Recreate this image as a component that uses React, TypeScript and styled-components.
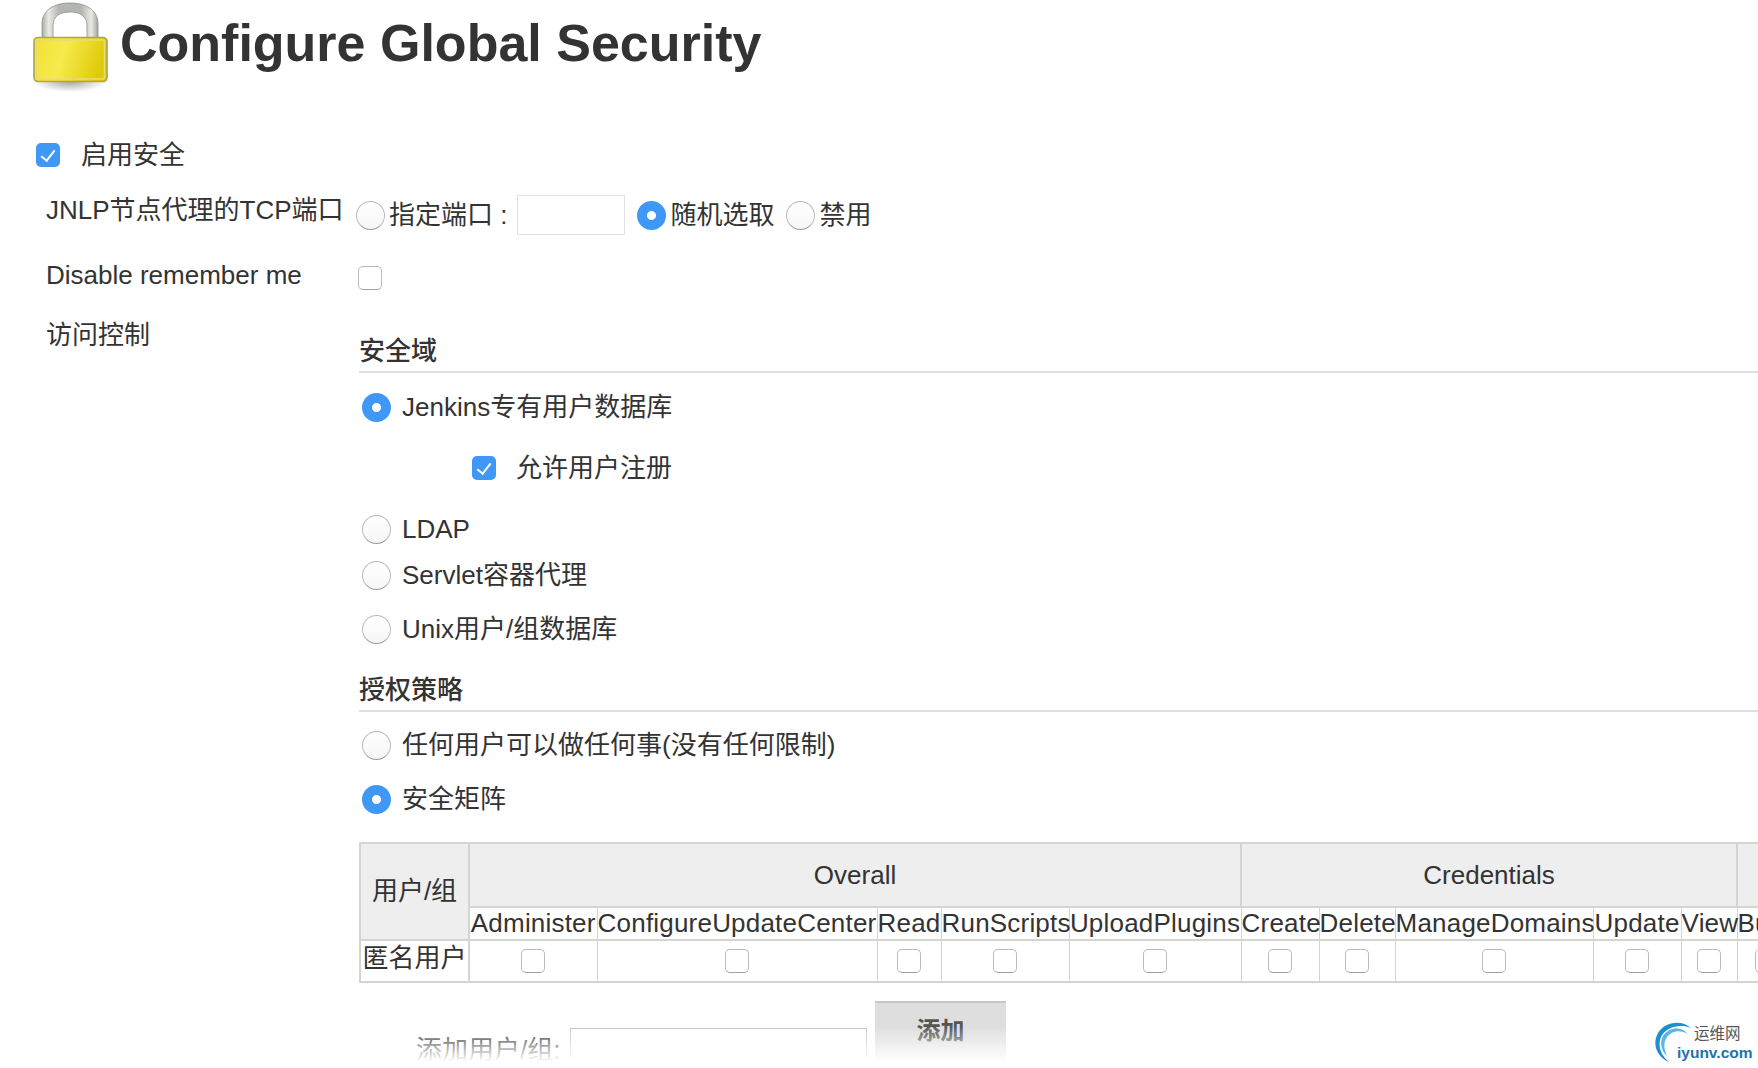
import React from "react";
import styled, { createGlobalStyle } from "styled-components";

const GlobalStyle = createGlobalStyle`
  html, body {
    margin: 0;
    padding: 0;
    background: #fff;
  }
  body {
    font-family: "Liberation Sans", "Noto Sans CJK SC", sans-serif;
    font-size: 26px;
    color: #333;
  }
`;

const columns = [
  { name: "Administer", width: 128 },
  { name: "ConfigureUpdateCenter", width: 280 },
  { name: "Read", width: 64 },
  { name: "RunScripts", width: 128 },
  { name: "UploadPlugins", width: 172 },
  { name: "Create", width: 78 },
  { name: "Delete", width: 76 },
  { name: "ManageDomains", width: 198 },
  { name: "Update", width: 88 },
  { name: "View", width: 56 },
  { name: "Build", width: 60 },
];

const LockIcon = () => (
  <LockSvg viewBox="33 0 75 92">
    <defs>
      <linearGradient id="shackle" x1="0" y1="0" x2="1" y2="0">
        <stop offset="0" stopColor="#a9aca6" />
        <stop offset="0.12" stopColor="#e9eae7" />
        <stop offset="0.3" stopColor="#b4b6b1" />
        <stop offset="0.7" stopColor="#b4b6b1" />
        <stop offset="0.88" stopColor="#e9eae7" />
        <stop offset="1" stopColor="#a2a59f" />
      </linearGradient>
      <linearGradient id="lockBody" x1="0" y1="0" x2="1" y2="0.2">
        <stop offset="0" stopColor="#f2e032" />
        <stop offset="0.45" stopColor="#f6ea4e" />
        <stop offset="1" stopColor="#e0cb08" />
      </linearGradient>
      <radialGradient id="lockShadow" cx="0.5" cy="0.5" r="0.5">
        <stop offset="0" stopColor="#a8a8a8" />
        <stop offset="1" stopColor="#ffffff" />
      </radialGradient>
    </defs>
    <ellipse cx="70" cy="82" rx="36" ry="10" fill="url(#lockShadow)" />
    <path
      d="M42 40 V24 C42 10 54 3 70 3 C86 3 98 10 98 24 V40 H87 V26 C87 16 80 12 70 12 C60 12 53 16 53 26 V40 Z"
      fill="url(#shackle)"
      stroke="#8f928c"
      strokeWidth="0.8"
    />
    <rect x="34" y="37.5" width="73" height="44" rx="4" fill="url(#lockBody)" stroke="#b3a23e" strokeWidth="1.6" />
    <rect x="36.5" y="40" width="68" height="39" rx="2" fill="none" stroke="#e6db7c" strokeWidth="1.4" />
  </LockSvg>
);

const WatermarkIcon = () => (
  <WatermarkSvg viewBox="0 0 38 41">
    <path d="M37 6 C27 -3 9 0 3 13 C-2 25 5 36 15 40 C8 34 3 25 7 15 C11 6 25 1 37 6 Z" fill="#1f8fd0" />
    <path d="M34 12 C27 4 15 5 9 14 C5 21 8 30 13 34 C10 27 9 21 13 15 C17 9 26 7 34 12 Z" fill="#58b6e4" />
  </WatermarkSvg>
);

export default function App() {
  return (
    <Page>
      <GlobalStyle />
      <Header>
        <LockIcon />
        <Title>Configure Global Security</Title>
      </Header>

      <EnableRow>
        <CheckBox type="checkbox" checked readOnly />
        <LiftedText>启用安全</LiftedText>
      </EnableRow>

      <FieldRow $height={70}>
        <FieldLabel $shift={-8}>JNLP节点代理的TCP端口</FieldLabel>
        <PortOptions>
          <Radio type="radio" readOnly checked={false} />
          <PortText>指定端口 :</PortText>
          <PortInput />
          <Radio type="radio" readOnly checked />
          <PortText>随机选取</PortText>
          <Radio type="radio" readOnly checked={false} $left={12} />
          <PortText>禁用</PortText>
        </PortOptions>
      </FieldRow>

      <FieldRow $height={55}>
        <FieldLabel $shift={-2}>Disable remember me</FieldLabel>
        <RememberBox type="checkbox" readOnly checked={false} />
      </FieldRow>

      <AccessRow>
        <AccessLabel>访问控制</AccessLabel>
        <AccessBody>
          <SectionTitle>安全域</SectionTitle>
          <Option $top={14}>
            <Radio type="radio" readOnly checked />
            <LiftedText>Jenkins专有用户数据库</LiftedText>
          </Option>
          <SubOption>
            <CheckBox type="checkbox" checked readOnly />
            <LiftedText>允许用户注册</LiftedText>
          </SubOption>
          <Option $top={21}>
            <Radio type="radio" readOnly checked={false} />
            <span>LDAP</span>
          </Option>
          <Option $top={6}>
            <Radio type="radio" readOnly checked={false} />
            <LiftedText>Servlet容器代理</LiftedText>
          </Option>
          <Option $top={14}>
            <Radio type="radio" readOnly checked={false} />
            <LiftedText>Unix用户/组数据库</LiftedText>
          </Option>

          <SectionTitle $top={16}>授权策略</SectionTitle>
          <Option $top={13}>
            <Radio type="radio" readOnly checked={false} />
            <LiftedText>任何用户可以做任何事(没有任何限制)</LiftedText>
          </Option>
          <Option $top={14}>
            <Radio type="radio" readOnly checked />
            <LiftedText>安全矩阵</LiftedText>
          </Option>

          <Matrix>
            <colgroup>
              <col style={{ width: 109 }} />
              {columns.map((c) => (
                <col key={c.name} style={{ width: c.width }} />
              ))}
            </colgroup>
            <thead>
              <tr>
                <UserHead rowSpan={2}>用户/组</UserHead>
                <GroupHead colSpan={5}>Overall</GroupHead>
                <GroupHead colSpan={5}>Credentials</GroupHead>
                <GroupHead />
              </tr>
              <tr>
                {columns.map((c) => (
                  <PermHead key={c.name}>{c.name}</PermHead>
                ))}
              </tr>
            </thead>
            <tbody>
              <tr>
                <UserCell>匿名用户</UserCell>
                {columns.map((c) => (
                  <BoxCell key={c.name}>
                    <CellBox type="checkbox" readOnly checked={false} />
                  </BoxCell>
                ))}
              </tr>
            </tbody>
          </Matrix>

          <AddRow>
            <AddLabel>添加用户/组:</AddLabel>
            <AddInput />
            <AddButton>添加</AddButton>
          </AddRow>
        </AccessBody>
      </AccessRow>

      <BottomFade />
      <Watermark>
        <WatermarkIcon />
        <WatermarkCn>运维网</WatermarkCn>
        <WatermarkEn>iyunv.com</WatermarkEn>
      </Watermark>
    </Page>
  );
}

const Page = styled.div`
  position: relative;
  width: 1758px;
  height: 1068px;
  overflow: hidden;
  background: #fff;
`;

const Header = styled.div`
  display: flex;
  align-items: flex-start;
  column-gap: 12px;
  height: 130px;
  padding-left: 33px;
  box-sizing: border-box;
`;

const LockSvg = styled.svg`
  width: 75px;
  height: 92px;
  flex: none;
`;

const Title = styled.h1`
  margin: 17px 0 0;
  font-size: 52px;
  line-height: 52px;
  font-weight: 700;
  color: #333;
`;

const EnableRow = styled.div`
  display: flex;
  align-items: center;
  column-gap: 21px;
  height: 50px;
  padding-left: 36px;
`;

const LiftedText = styled.span`
  margin-bottom: 5px;
  white-space: nowrap;
`;

const FieldRow = styled.div<{ $height: number }>`
  display: flex;
  align-items: center;
  height: ${(p) => p.$height}px;
`;

const FieldLabel = styled.div<{ $shift: number }>`
  width: 310px;
  padding-left: 46px;
  flex: none;
  margin-top: ${(p) => p.$shift * 2}px;
  white-space: nowrap;
`;

const PortOptions = styled.div`
  display: flex;
  align-items: center;
`;

const PortText = styled.span`
  margin: 0 0 5px 4px;
  white-space: nowrap;
`;

const PortInput = styled.input`
  width: 108px;
  height: 40px;
  box-sizing: border-box;
  margin: 0 12px 0 10px;
  border: 1px solid #e2e2e2;
  background: #fff;
`;

const Radio = styled.input<{ $left?: number }>`
  appearance: none;
  flex: none;
  width: 29px;
  height: 29px;
  margin: 0 0 0 ${(p) => p.$left ?? 0}px;
  border-radius: 50%;
  box-sizing: border-box;
  border: 1px solid #bbb;
  border-bottom-color: #999;
  background: linear-gradient(#fff, #f6f6f6);
  &:checked {
    border: none;
    background: radial-gradient(circle, #fff 0, #fff 4px, #3f97f6 5px);
  }
`;

const CheckBox = styled.input`
  appearance: none;
  position: relative;
  flex: none;
  width: 24px;
  height: 24px;
  margin: 0;
  border-radius: 5px;
  background: #3f97f6;
  &::after {
    content: "";
    position: absolute;
    left: 8px;
    top: 4px;
    width: 6px;
    height: 12px;
    border: solid #fff;
    border-width: 0 2.5px 2.5px 0;
    transform: rotate(38deg);
  }
`;

const EmptyBox = styled.input`
  appearance: none;
  flex: none;
  width: 24px;
  height: 24px;
  margin: 0;
  box-sizing: border-box;
  border-radius: 5px;
  border: 1px solid #bbb;
  border-bottom-color: #a0a0a0;
  background: #fff;
`;

const RememberBox = styled(EmptyBox)`
  margin-left: 2px;
`;

const AccessRow = styled.div`
  display: flex;
  align-items: flex-start;
`;

const AccessLabel = styled.div`
  width: 313px;
  padding-left: 46px;
  margin-top: 9px;
  flex: none;
`;

const AccessBody = styled.div`
  flex: none;
  width: 1399px;
  padding-top: 21px;
`;

const SectionTitle = styled.div<{ $top?: number }>`
  height: 47px;
  box-sizing: border-box;
  margin-top: ${(p) => p.$top ?? 0}px;
  padding-top: 8px;
  line-height: 34px;
  font-weight: 500;
  border-bottom: 2px solid #dedede;
`;

const Option = styled.div<{ $top: number }>`
  display: flex;
  align-items: center;
  column-gap: 11px;
  height: 40px;
  margin-top: ${(p) => p.$top}px;
  padding-left: 3px;
`;

const SubOption = styled.div`
  display: flex;
  align-items: center;
  column-gap: 20px;
  height: 40px;
  margin-top: 21px;
  padding-left: 113px;
`;

const Matrix = styled.table`
  margin-top: 23px;
  width: 1437px;
  table-layout: fixed;
  border-collapse: collapse;
  border: 2px solid #d4d4d0;
`;

const GroupHead = styled.th`
  height: 62px;
  padding: 0;
  background: #eee;
  border: 2px solid #d4d4d0;
  font-weight: 400;
`;

const UserHead = styled(GroupHead)`
  padding-bottom: 6px;
`;

const PermHead = styled.th`
  height: 29px;
  padding: 0 0 2px;
  border: 1px solid #d4d4d0;
  border-bottom-width: 2px;
  border-top-width: 2px;
  font-weight: 400;
  line-height: 28px;
  letter-spacing: 0.2px;
  text-align: center;
  white-space: nowrap;
  overflow: visible;
`;

const UserCell = styled.td`
  height: 34px;
  padding: 0 0 6px;
  line-height: 30px;
  background: #fff;
  border: 2px solid #d4d4d0;
  text-align: center;
  white-space: nowrap;
`;

const BoxCell = styled.td`
  height: 40px;
  padding: 0;
  border: 1px solid #d4d4d0;
  border-bottom-width: 2px;
  text-align: center;
  vertical-align: middle;
`;

const CellBox = styled(EmptyBox)`
  display: block;
  margin: 0 auto;
`;

const AddRow = styled.div`
  display: flex;
  align-items: flex-start;
  margin-top: 18px;
  padding-left: 57px;
`;

const AddLabel = styled.span`
  margin-top: 32px;
  width: 154px;
  white-space: nowrap;
  line-height: 34px;
`;

const AddInput = styled.input`
  width: 297px;
  height: 50px;
  margin-top: 27px;
  box-sizing: border-box;
  border: 1px solid #c4c4c4;
  background: #fff;
`;

const AddButton = styled.button`
  width: 131px;
  height: 80px;
  margin-left: 8px;
  padding: 0 0 28px;
  border: none;
  border-top: 2px solid #c8c8c8;
  background: #dedede;
  color: #555;
  font-family: inherit;
  font-size: 24px;
  font-weight: 700;
`;

const BottomFade = styled.div`
  position: absolute;
  left: 0;
  right: 0;
  bottom: 0;
  height: 42px;
  background: linear-gradient(rgba(255, 255, 255, 0), #fff 85%);
`;

const Watermark = styled.div`
  position: absolute;
  right: 0;
  bottom: 0;
  width: 104px;
  height: 46px;
`;

const WatermarkSvg = styled.svg`
  position: absolute;
  left: 0;
  top: 0;
  width: 38px;
  height: 41px;
`;

const WatermarkCn = styled.span`
  position: absolute;
  left: 40px;
  top: 3px;
  font-size: 15.5px;
  line-height: 18px;
  color: #555;
`;

const WatermarkEn = styled.span`
  position: absolute;
  left: 23px;
  top: 22px;
  font-size: 15.5px;
  line-height: 18px;
  font-weight: 700;
  color: #1c74ad;
`;
